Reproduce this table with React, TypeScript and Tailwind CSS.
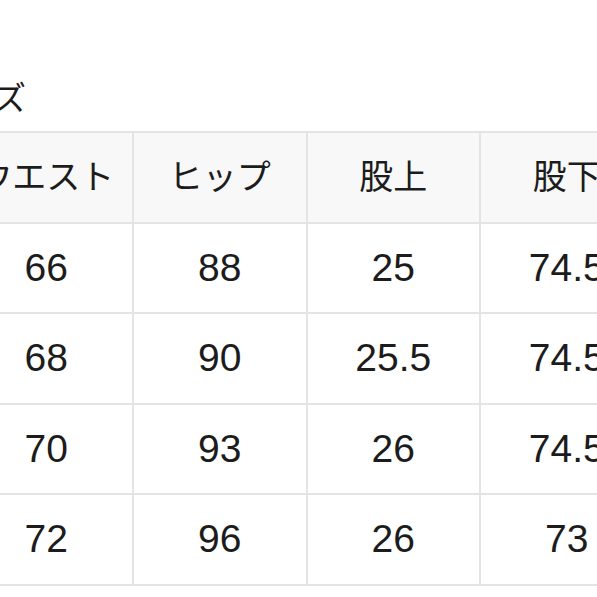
const headers = ["ウエスト", "ヒップ", "股上", "股下"];

const rows = [
  ["66", "88", "25", "74.5"],
  ["68", "90", "25.5", "74.5"],
  ["70", "93", "26", "74.5"],
  ["72", "96", "26", "73"],
];

export default function App() {
  return (
    <div
      className="w-[597px] h-[597px] overflow-hidden bg-white text-[#1c1c1c]"
      style={{ fontFamily: '"Liberation Sans", "Noto Sans CJK JP", sans-serif' }}
    >
      <div className="pt-[82px]">
        {/* title, mostly cut off on the left */}
        <div className="ml-[-72px] h-[33px] text-[33px] leading-[33px] whitespace-nowrap">
          サイズ
        </div>

        <div className="mt-[16px] ml-[-41.5px] w-max bg-[#e4e4e4] p-[2px] grid grid-cols-[repeat(4,171.5px)] auto-rows-[88.5px] gap-[2px]">
          {headers.map((h) => (
            <div
              key={h}
              className="bg-[#f8f8f8] flex items-center justify-center text-[34px] whitespace-nowrap"
            >
              {h}
            </div>
          ))}
          {rows.map((r, i) =>
            r.map((v, j) => (
              <div
                key={`${i}-${j}`}
                className="bg-white flex items-center justify-center text-[39px]"
              >
                {v}
              </div>
            ))
          )}
        </div>
      </div>
    </div>
  );
}
